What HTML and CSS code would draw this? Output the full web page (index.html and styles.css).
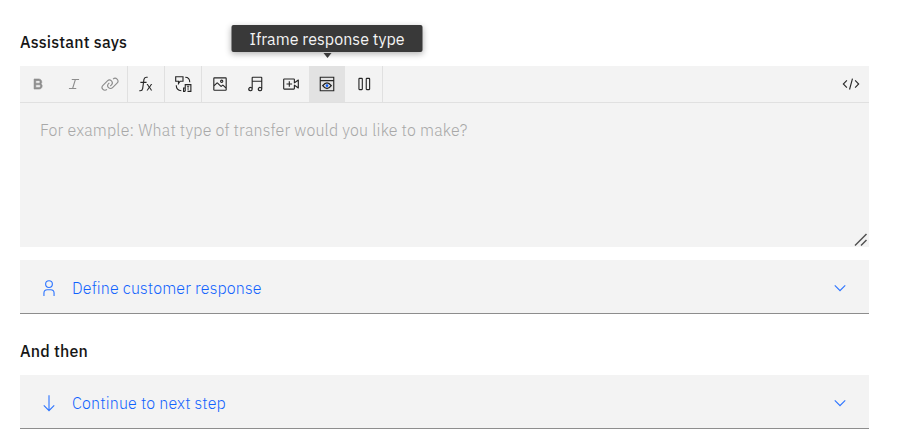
FILE: index.html
```html
<!DOCTYPE html>
<html lang="en">
<head>
<meta charset="utf-8">
<title>Step editor</title>
<link rel="stylesheet" href="styles.css">
</head>
<body>
<main class="step">
  <h2 class="heading"><span class="t-assistant">Assistant says</span></h2>
  <section class="editor">
    <div class="toolbar">
      <div class="group">
        <button class="tool muted" aria-label="Bold"><svg viewBox="0 0 32 32"><path fill="currentColor" stroke="currentColor" d="M18.250 25H9V7h8.500a5.250 5.250 0 0 1 4 8.650A5.250 5.250 0 0 1 18.250 25ZM12 22h6.230a2.250 2.250 0 0 0 0-4.500H12Zm0-7.500h5.500a2.250 2.250 0 0 0 0-4.500H12Z"/></svg></button>
        <button class="tool muted" aria-label="Italic"><svg viewBox="0 0 32 32"><path fill="currentColor" d="M25 9V7H12v2h5.140l-4.370 14H7v2h13v-2h-5.140l4.370-14H25z"/></svg></button>
        <button class="tool muted" aria-label="Link"><svg viewBox="0 0 32 32"><path fill="currentColor" d="M29.250 6.760a6 6 0 0 0-8.500 0l1.420 1.420a4 4 0 1 1 5.670 5.670l-8 8a4 4 0 1 1-5.670-5.660l1.410-1.420-1.410-1.420-1.420 1.420a6 6 0 0 0 0 8.500A6 6 0 0 0 17 25a6 6 0 0 0 4.270-1.760l8-8a6 6 0 0 0-.020-8.480Z"/><path fill="currentColor" d="M4.190 24.820a4 4 0 0 1 0-5.670l8-8a4 4 0 0 1 5.670 0A3.940 3.940 0 0 1 19 14a4 4 0 0 1-1.170 2.850L15.710 19l1.420 1.420 2.120-2.120a6 6 0 0 0-8.510-8.510l-8 8a6 6 0 0 0 0 8.510A6 6 0 0 0 7 28a6.070 6.070 0 0 0 4.280-1.760l-1.420-1.420a4 4 0 0 1-5.670 0Z"/></svg></button>
      </div>
      <div class="group">
        <button class="tool" aria-label="Function"><svg viewBox="0 0 32 32"><path fill="currentColor" d="M27 16h-2.150L22 20.350 19.150 16H17l3.800 5.800L17 27.600h2.150L22 23.250l2.850 4.350H27l-3.800-5.800ZM12.750 12l.600-4.200A3.300 3.300 0 0 1 16.600 5H19V3h-2.400a5.300 5.300 0 0 0-5.230 4.500L10.730 12H6v2h4.450l-1.400 10.200A3.300 3.300 0 0 1 5.800 27H4v2h1.800a5.300 5.300 0 0 0 5.230-4.500L12.470 14H17v-2Z"/></svg></button>
      </div>
      <div class="group">
        <button class="tool" aria-label="Change"><svg viewBox="0 0 32 32" fill="none" stroke="currentColor" stroke-width="2"><path d="M3 3h13v8h-5l-3 4v-4H3zM20 4c5 0 8 3 8 9M4 18c0 6 3 9 9 10M20 29h-3v-6h3M20 29V17h10v12h-6"/><path d="M23 20h4M25 20v7" stroke-width="1.500"/></svg></button>
      </div>
      <div class="group media">
        <button class="tool" aria-label="Image"><svg viewBox="0 0 32 32"><path fill="currentColor" d="M19 14a3 3 0 1 0-3-3 3 3 0 0 0 3 3Zm0-4a1 1 0 1 1-1 1 1 1 0 0 1 1-1Z"/><path fill="currentColor" d="M26 4H6a2 2 0 0 0-2 2v20a2 2 0 0 0 2 2h20a2 2 0 0 0 2-2V6a2 2 0 0 0-2-2Zm0 22H6v-6l5-5 5.590 5.590a2 2 0 0 0 2.820 0L21 19l5 5Zm0-4.830-3.590-3.590a2 2 0 0 0-2.820 0L18 19.170l-5.590-5.590a2 2 0 0 0-2.820 0L6 17.170V6h20Z"/></svg></button>
        <button class="tool" aria-label="Audio"><svg viewBox="0 0 32 32"><path fill="currentColor" d="M27 3H12a2 2 0 0 0-2 2v16.560A4 4 0 1 0 12 25V12h15v9.560A4 4 0 1 0 29 25V5a2 2 0 0 0-2-2ZM8 27a2 2 0 1 1 2-2 2 2 0 0 1-2 2Zm17 0a2 2 0 1 1 2-2 2 2 0 0 1-2 2ZM12 10V5h15v5Z"/></svg></button>
        <button class="tool" aria-label="Video"><svg viewBox="0 0 32 32"><path fill="currentColor" d="M18 15h-4v-4h-2v4H8v2h4v4h2v-4h4v-2z"/><path fill="currentColor" d="M21 26H4a2 2 0 0 1-2-2V8a2 2 0 0 1 2-2h17a2 2 0 0 1 2 2v4.060l5.420-3.870A1 1 0 0 1 30 9v14a1 1 0 0 1-1.580.810L23 19.940V24a2 2 0 0 1-2 2ZM4 8v16h17v-6a1 1 0 0 1 1.580-.810L28 21.060V10.940l-5.420 3.870A1 1 0 0 1 21 14V8Z"/></svg></button>
        <div class="tool active">
          <svg viewBox="0 0 32 32"><path fill="none" stroke="currentColor" stroke-width="2" d="M4 4h24v24H4zM4 10h24"/><path fill="none" stroke="currentColor" stroke-width="2.500" d="M8.500 19q7.500-10 15 0-7.500 10-15 0Z"/><circle class="pupil" cx="16" cy="19" r="2.500"/></svg>
          <span class="tooltip" role="tooltip"><span class="t-tooltip">Iframe response type</span></span>
        </div>
        <button class="tool" aria-label="Pause"><svg viewBox="0 0 32 32"><path fill="none" stroke="currentColor" stroke-width="2" d="M8 6h4q1 0 1 1v18q0 1-1 1H8q-1 0-1-1V7q0-1 1-1ZM21 6h4q1 0 1 1v18q0 1-1 1h-4q-1 0-1-1V7q0-1 1-1Z"/></svg></button>
      </div>
      <button class="tool code" aria-label="Code"><svg viewBox="0 0 32 32"><path fill="currentColor" d="m31 16-7 7-1.410-1.410L28.170 16l-5.580-5.590L24 9l7 7zM1 16l7-7 1.410 1.410L3.830 16l5.580 5.590L8 23l-7-7zm11.420 9.480L17.640 6l1.930.520L14.350 26z"/></svg></button>
    </div>
    <div class="input"><span class="t-placeholder">For example: What type of transfer would you like to make?</span></div>
    <svg class="grip" viewBox="0 0 14 14"><path d="M1 12.500 12.500 1M7 12.500 12.500 7"/></svg>
  </section>
  <div class="row">
    <svg class="lead" viewBox="0 0 32 32"><path d="M16 4a5 5 0 1 1-5 5 5 5 0 0 1 5-5m0-2a7 7 0 1 0 7 7 7 7 0 0 0-7-7ZM26 30h-2v-5a5 5 0 0 0-5-5h-6a5 5 0 0 0-5 5v5H6v-5a7 7 0 0 1 7-7h6a7 7 0 0 1 7 7Z"/></svg>
    <span class="t-define">Define customer response</span>
    <svg class="chevron" viewBox="0 0 16 16"><path d="M8 11 3 6l.700-.700L8 9.600l4.300-4.300.700.700z"/></svg>
  </div>
  <h2 class="heading next"><span class="t-then">And then</span></h2>
  <div class="row">
    <svg class="lead" viewBox="0 0 32 32"><path d="M24.590 19.590 17 27.170V2h-2v25.170l-7.590-7.580L6 21l10 10 10-10-1.410-1.410z"/></svg>
    <span class="t-continue">Continue to next step</span>
    <svg class="chevron" viewBox="0 0 16 16"><path d="M8 11 3 6l.700-.700L8 9.600l4.300-4.300.700.700z"/></svg>
  </div>
</main>
</body>
</html>
```

FILE: styles.css
```css
* { box-sizing: border-box; }
body {
  margin: 0;
  background: #fff;
  color: #161616;
  font: 16px/22px "IBM Plex Sans", Roboto, sans-serif;
}
.step { width: 869px; padding: 31px 0 0 20px; }
.heading { margin: 0 0 13px; font-size: 16px; line-height: 22px; font-weight: 500; }
.heading.next { margin: 26px 0 13px; }
.editor { position: relative; height: 181px; background: #f3f3f3; }
.toolbar { display: flex; height: 37px; border-bottom: 1px solid #e0e0e0; }
.group { display: flex; border-right: 1px solid #e0e0e0; }
.tool {
  position: relative;
  display: flex;
  align-items: center;
  justify-content: center;
  width: 36px;
  padding: 0;
  border: 0;
  background: none;
  color: #262626;
}
.group:first-child .tool:last-child { width: 35px; }
.media .tool:first-child { width: 35px; }
.media .tool:last-child { width: 37px; }
.tool svg { width: 18px; height: 18px; }
.muted { color: #8d8d8d; }
.tool.active { width: 36px; background: #e2e2e2; }
.pupil { fill: #0f62fe; }
.code { margin-left: auto; }
.tooltip {
  position: absolute;
  left: 50%;
  top: -41px;
  transform: translateX(-50%);
  width: 191px;
  height: 27px;
  padding-left: 18px;
  border-radius: 2px;
  background: #393939;
  color: #f4f4f4;
  line-height: 29px;
  white-space: nowrap;
  box-shadow: 0 2px 6px rgba(0, 0, 0, .3);
}
.tooltip::after {
  content: "";
  position: absolute;
  left: 92px;
  top: 28px;
  border: 4px solid transparent;
  border-top: 5px solid #393939;
  border-bottom: 0;
}
.input { padding: 16px 20px; color: #a8a8a8; font-weight: 300; }
.grip {
  position: absolute;
  right: 1px;
  bottom: 0;
  width: 14px;
  height: 14px;
  fill: none;
  stroke: #525252;
  stroke-width: 1.5;
}
.row {
  display: flex;
  align-items: center;
  height: 54px;
  padding: 2px 20px 0;
  border-bottom: 1px solid #8d8d8d;
  background: #f3f3f3;
  color: #0f62fe;
  font-weight: 300;
}
.editor + .row { margin-top: 13px; }
.row svg { flex: none; fill: #2f76ff; }
.lead { width: 18px; height: 18px; margin-right: 14px; }
.chevron { width: 18px; height: 18px; margin-left: auto; }
.t-assistant, .t-then { letter-spacing: .2px; }
.t-tooltip { letter-spacing: .05px; }
.t-placeholder { letter-spacing: .175px; }
.t-define, .t-continue { letter-spacing: .16px; }
```
